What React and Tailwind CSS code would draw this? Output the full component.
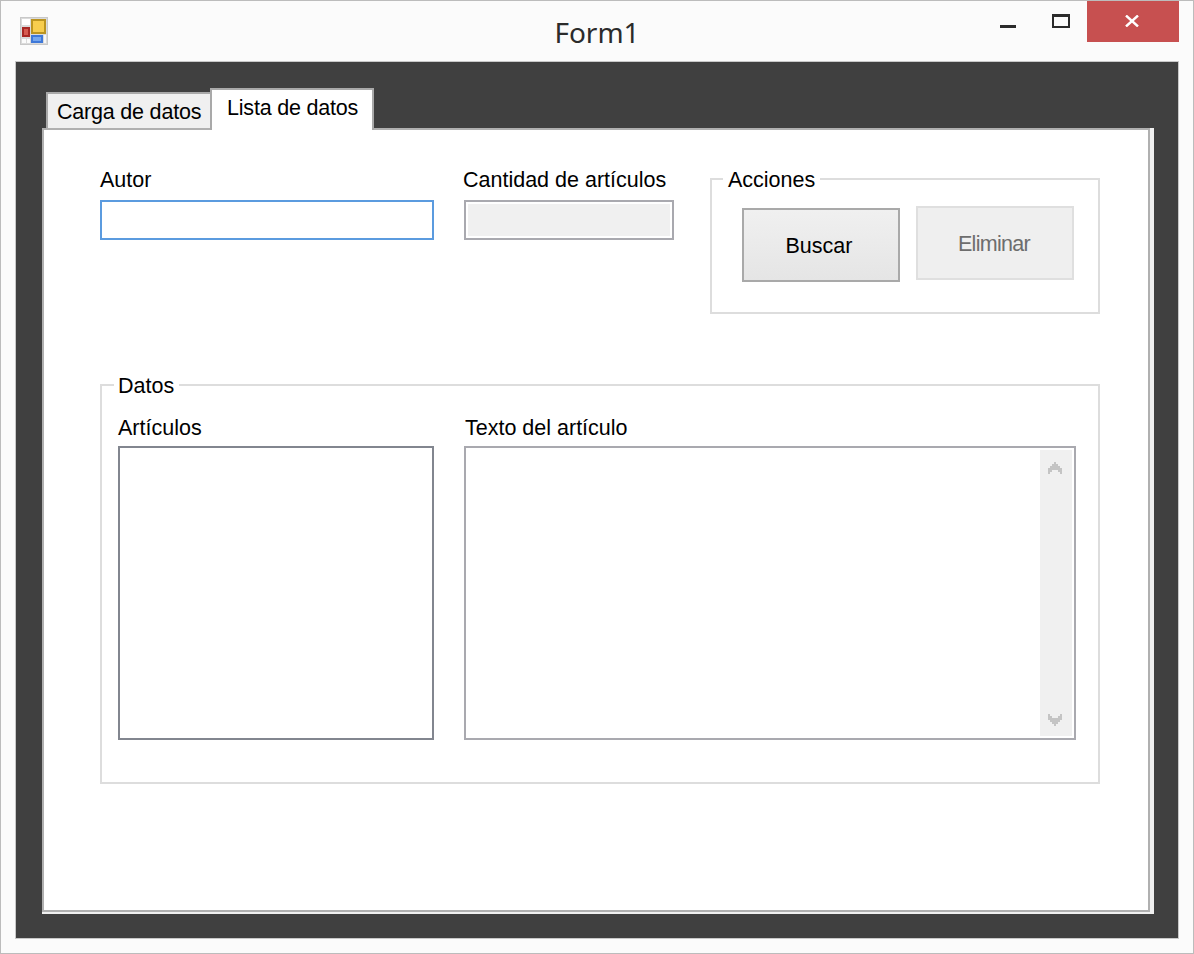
import React from "react";

const sans = "font-['Liberation_Sans',Arial,sans-serif]";

function AppIcon() {
  return (
    <svg width="28" height="28" viewBox="0 0 28 28" className="block">
      <rect x="0" y="0" width="28" height="28" fill="#c8c8c8" />
      <rect x="1" y="1" width="26" height="26" fill="#dadada" />
      <rect x="2" y="2" width="8" height="6" fill="#ffffff" />
      <rect x="2" y="10" width="8" height="10" fill="#a82824" />
      <rect x="4" y="12" width="4" height="6" fill="#d65a50" />
      <rect x="2" y="22" width="4" height="4" fill="#fbfbfb" />
      <rect x="7" y="22" width="3" height="4" fill="#fbfbfb" />
      <rect x="11" y="2" width="15" height="15" fill="#bb9420" />
      <rect x="13" y="4" width="11" height="11" fill="#f7cd4e" />
      <rect x="11" y="18" width="12" height="8" fill="#3f78d8" />
      <rect x="13" y="20" width="8" height="4" fill="#74a6ee" />
      <rect x="24" y="18" width="2" height="8" fill="#f6f6f6" />
    </svg>
  );
}

const chevronRows = [[3, 1], [2, 3], [1, 5], [0, 7], [0, 2], [5, 2], [0, 1], [6, 1]];
const chevronY = [0, 1, 2, 3, 4, 4, 5, 5];

function Chevron({ up }) {
  return (
    <svg width="14" height="12" viewBox="0 0 7 6" className="block" shapeRendering="crispEdges">
      {chevronRows.map(([x, w], i) => (
        <rect key={i} x={x} y={up ? chevronY[i] : 5 - chevronY[i]} width={w} height="1" fill="#c4c4c4" />
      ))}
    </svg>
  );
}

function Label({ children, className = "" }) {
  return <div className={`h-6 leading-6 text-[21.5px] text-black whitespace-nowrap ${className}`}>{children}</div>;
}

export default function App() {
  return (
    <div className={`w-[1194px] h-[954px] flex flex-col border border-[#bcbcbc] bg-[#fbfbfb] ${sans}`}>
      {/* Title bar */}
      <header className="h-[60px] shrink-0 grid grid-cols-[1fr_auto_1fr] pl-[14px] pr-[14px]">
        <div className="pl-[5px] pt-4">
          <AppIcon />
        </div>
        <div className="font-['Noto_Sans',sans-serif] text-[28px] leading-[38px] pt-3 text-[#2b2b2b]">Form1</div>
        <div className="flex justify-end items-start">
          <button className="w-[53px] h-[41px] flex justify-center pt-6">
            <span className="block w-4 h-[3px] bg-[#2b2b2b]" />
          </button>
          <button className="w-[53px] h-[41px] flex justify-center pt-[13px]">
            <span className="block w-[18px] h-[14px] border-2 border-t-[3px] border-[#2b2b2b]" />
          </button>
          <button className="w-[92px] h-[41px] bg-[#c75050] flex justify-center pt-[14px] pr-0.5">
            <svg width="14" height="12" viewBox="0 0 14 12" className="block">
              <path d="M1 0.5 L13 11.5 M13 0.5 L1 11.5" stroke="#ffffff" strokeWidth="2.4" fill="none" />
            </svg>
          </button>
        </div>
      </header>

      {/* Dark client area */}
      <main className="flex-1 mx-[14px] mb-[14px] border border-[#c8c8c8] bg-[#404040] pt-[26px] pl-[26px] pr-6 pb-6 flex flex-col">
        {/* Tabs */}
        <div className="flex items-end pl-1 h-[42px] shrink-0 -mb-0.5 text-[21.5px] tracking-[-0.2px] text-black">
          <div className="w-[166px] h-[38px] border-t-2 border-l-2 border-[#a9a9a9] bg-[#f0f0f0] pl-[9px] leading-[36px] whitespace-nowrap">
            Carga de datos
          </div>
          <div className="relative z-10 -ml-0.5 w-[164px] h-[42px] border-t-2 border-x-2 border-[#a9a9a9] bg-white pl-[15px] leading-[36px] whitespace-nowrap">
            Lista de datos
          </div>
        </div>

        {/* Tab page */}
        <div className="flex-1 flex flex-col bg-[#f0f0f0] pr-1 pb-0.5">
          <div className="flex-1 bg-white border-2 border-[#b0b0b0] pl-14 pt-[38px]">
            <div className="flex items-start">
              <div className="w-[334px]">
                <Label className="mb-2">Autor</Label>
                <input className="block w-full h-10 border-2 border-[#5b9bdf] bg-white outline-none" />
              </div>
              <div className="w-[210px] ml-[30px]">
                <Label className="mb-2 -ml-px">Cantidad de artículos</Label>
                <div className="h-10 border-2 border-[#a9a9af] bg-white p-0.5">
                  <input disabled className="block w-full h-full bg-[#f0f0f0] outline-none" />
                </div>
              </div>
              <fieldset className="ml-9 w-[390px] h-[146px] border-2 border-[#dddddd]">
                <legend className="ml-[11px] pl-[5px] pr-[5px] h-[22px] leading-[24px] text-[21.5px] text-black">Acciones</legend>
                <div className="flex items-start gap-4 pl-[30px] pt-4">
                  <button className="w-[158px] h-[74px] mt-0.5 pr-1 pt-0.5 border-2 border-[#a9a9a9] bg-gradient-to-b from-[#f0f0f0] to-[#e5e5e5] text-[21.5px] text-black">
                    Buscar
                  </button>
                  <button disabled className="w-[158px] h-[74px] pt-0.5 pr-0.5 border-2 border-[#dfdfdf] bg-[#efefef] text-[21.5px] tracking-[-0.7px] text-[#6d6d6d]">
                    Eliminar
                  </button>
                </div>
              </fieldset>
            </div>

            <fieldset className="mt-[60px] w-[1000px] h-[410px] border-2 border-[#dddddd]">
              <legend className="ml-3 pl-1 pr-[5px] h-[22px] leading-[24px] text-[21.5px] text-black">Datos</legend>
              <div className="flex items-start pl-4 pt-5">
                <div className="w-[316px]">
                  <Label className="mb-1.5">Artículos</Label>
                  <div className="h-[294px] border-2 border-[#82868f] bg-white" />
                </div>
                <div className="w-[612px] ml-[30px]">
                  <Label className="mb-1.5 ml-px">Texto del artículo</Label>
                  <div className="h-[294px] border-2 border-[#a9a9af] bg-white p-0.5 flex justify-end">
                    <div className="w-8 h-full bg-[#f0f0f0] flex flex-col items-center justify-between pt-3 pb-2.5 pr-0.5">
                      <Chevron up />
                      <Chevron />
                    </div>
                  </div>
                </div>
              </div>
            </fieldset>
          </div>
        </div>
      </main>
    </div>
  );
}
